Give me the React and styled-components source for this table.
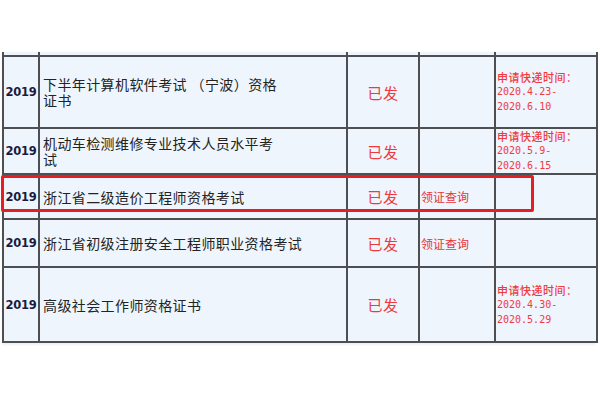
import styled, { createGlobalStyle } from "styled-components";

const rows = [
  {
    year: "2019",
    name: ["下半年计算机软件考试 （宁波）资格", "证书"],
    status: "已发",
    link: "",
    note: ["2020.4.23-", "2020.6.10"],
    height: 72,
  },
  {
    year: "2019",
    name: ["机动车检测维修专业技术人员水平考", "试"],
    status: "已发",
    link: "",
    note: ["2020.5.9-", "2020.6.15"],
    height: 44,
  },
  {
    year: "2019",
    name: ["浙江省二级造价工程师资格考试"],
    status: "已发",
    link: "领证查询",
    note: null,
    height: 45,
  },
  {
    year: "2019",
    name: ["浙江省初级注册安全工程师职业资格考试"],
    status: "已发",
    link: "领证查询",
    note: null,
    height: 48,
  },
  {
    year: "2019",
    name: ["高级社会工作师资格证书"],
    status: "已发",
    link: "",
    note: ["2020.4.30-", "2020.5.29"],
    height: 75,
  },
];

function App() {
  return (
    <>
      <GlobalStyle />
      <Page>
        <Frame>
          <Table>
            <colgroup>
              <col style={{ width: 36 }} />
              <col style={{ width: 308 }} />
              <col style={{ width: 72 }} />
              <col style={{ width: 76 }} />
              <col style={{ width: 102 }} />
            </colgroup>
            <tbody>
              <StubRow>
                <td />
                <td />
                <td />
                <td />
                <td />
              </StubRow>
              {rows.map((r, i) => (
                <tr key={i} style={{ height: r.height }}>
                  <YearCell>{r.year}</YearCell>
                  <NameCell>
                    {r.name.map((line, j) => (
                      <NameLine key={j}>{line}</NameLine>
                    ))}
                  </NameCell>
                  <StatusCell>{r.status}</StatusCell>
                  <LinkCell>{r.link}</LinkCell>
                  <NoteCell>
                    {r.note && (
                      <>
                        <NoteTitle>申请快递时间：</NoteTitle>
                        {r.note.map((d, j) => (
                          <NoteDate key={j}>{d}</NoteDate>
                        ))}
                      </>
                    )}
                  </NoteCell>
                </tr>
              ))}
            </tbody>
          </Table>
          <Highlight />
        </Frame>
      </Page>
    </>
  );
}

export default App;

const GlobalStyle = createGlobalStyle`
  html, body {
    margin: 0;
    padding: 0;
    background: #ffffff;
  }
`;

const Page = styled.div`
  width: 600px;
  height: 400px;
  padding: 52px 0 0 2px;
  box-sizing: border-box;
`;

const Frame = styled.div`
  position: relative;
  width: 594px;
  box-shadow: 0 2px 2px rgba(0, 0, 0, 0.06);
`;

const Table = styled.table`
  border-collapse: collapse;
  table-layout: fixed;
  width: 594px;
  background: #eef5fc;

  td {
    border: 2px solid #4e4f52;
    padding: 0;
    vertical-align: middle;
  }
`;

const StubRow = styled.tr`
  height: 4px;

  td {
    border-top: none;
    height: 2px;
  }
`;

const YearCell = styled.td`
  text-align: center;
  font-family: "DejaVu Sans", Verdana, sans-serif;
  font-weight: bold;
  font-size: 11.5px;
  color: #1b1b40;
  letter-spacing: -0.2px;
`;

const NameCell = styled.td`
  padding-left: 3px !important;
  font-family: "Noto Sans CJK SC", sans-serif;
  font-size: 14px;
  letter-spacing: 0.4px;
  color: #232323;
`;

const NameLine = styled.div`
  height: 16px;
  line-height: 16px;
  white-space: nowrap;
`;

const StatusCell = styled.td`
  text-align: center;
  font-family: "Noto Sans CJK SC", sans-serif;
  font-size: 15px;
  letter-spacing: 0.5px;
  color: #ec3a3e;
`;

const LinkCell = styled.td`
  padding-left: 1px !important;
  font-family: "Noto Sans CJK SC", sans-serif;
  font-size: 12px;
  color: #e8343a;
`;

const NoteCell = styled.td`
  padding-left: 1px !important;
  color: #f03a3e;
`;

const NoteTitle = styled.div`
  font-family: "Noto Sans CJK SC", sans-serif;
  font-size: 11px;
  letter-spacing: 0.5px;
  font-weight: 500;
  line-height: 14px;
  white-space: nowrap;
`;

const NoteDate = styled.div`
  font-family: "DejaVu Sans Mono", "Liberation Mono", monospace;
  font-size: 10px;
  line-height: 15px;
`;

const Highlight = styled.div`
  position: absolute;
  left: -1px;
  top: 123px;
  width: 533px;
  height: 37px;
  border: 3px solid #e61e22;
  border-radius: 2px;
  box-sizing: border-box;
  pointer-events: none;
`;
